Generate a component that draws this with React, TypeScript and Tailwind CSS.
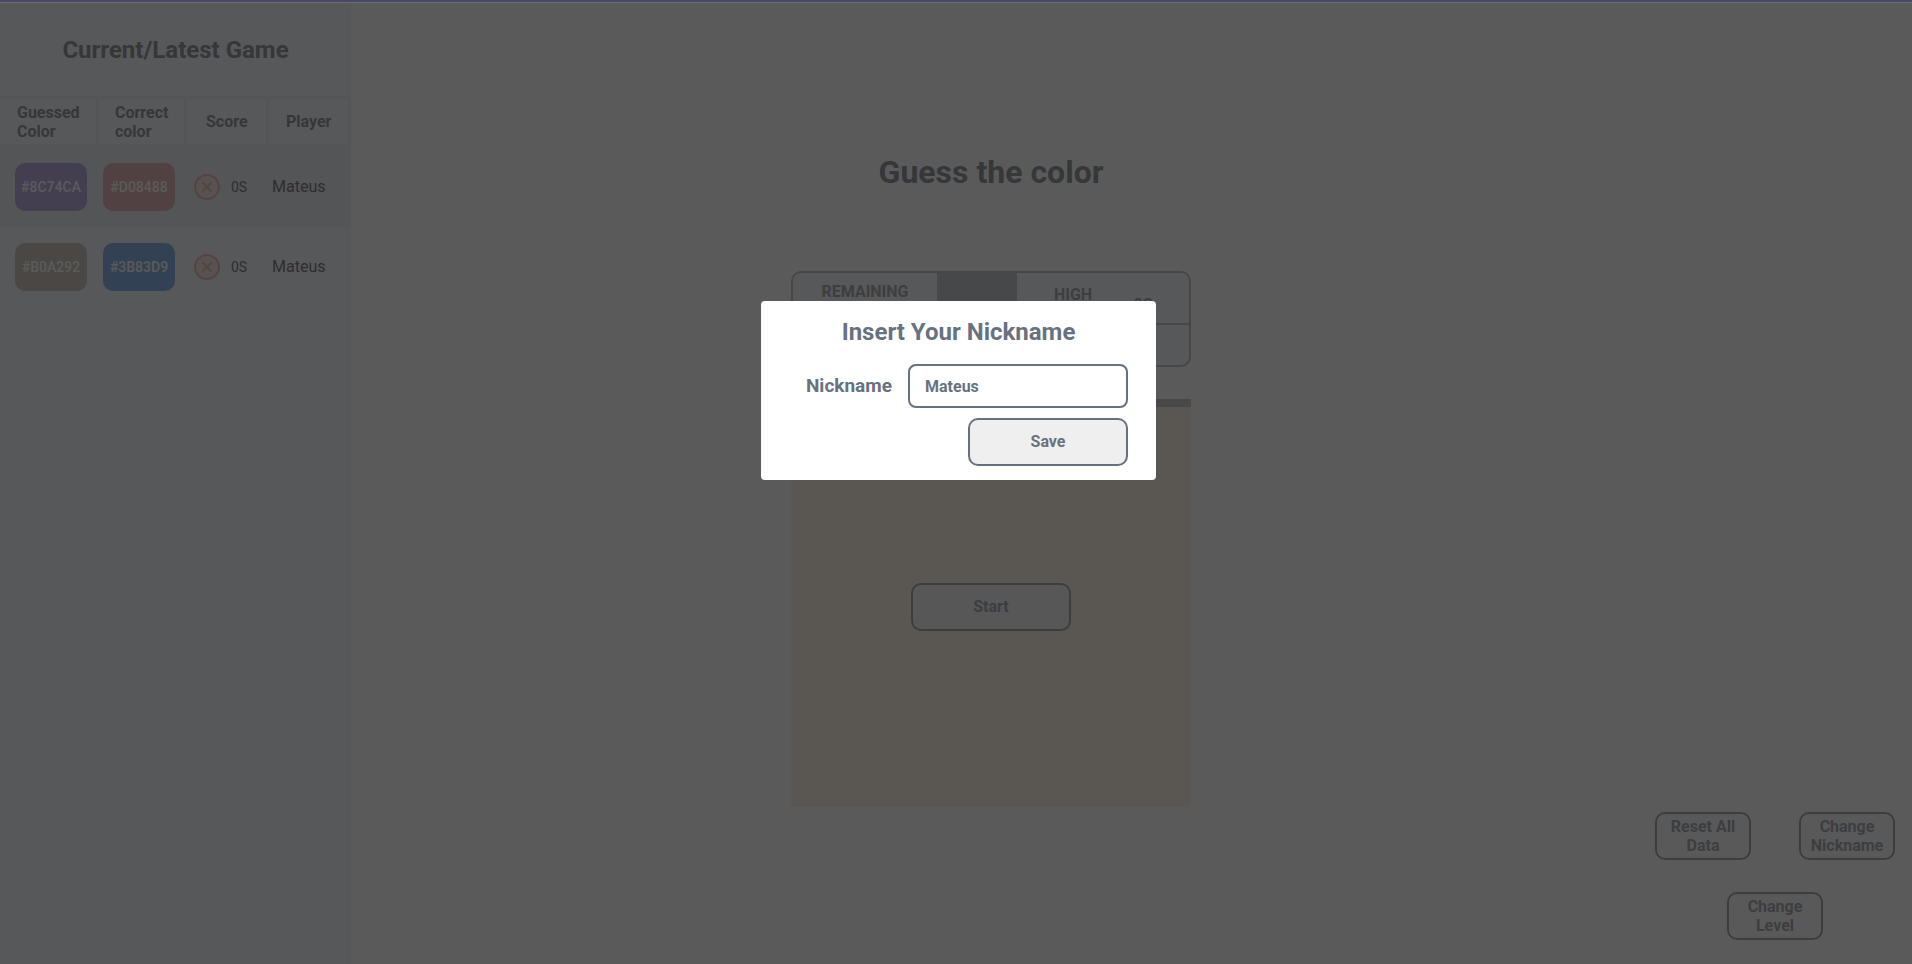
import React from "react";

type Guess = {
  guessed: string;
  guessedClass: string;
  correct: string;
  correctClass: string;
  score: string;
  player: string;
};

const guesses: Guess[] = [
  { guessed: "#8C74CA", guessedClass: "bg-[#8c74ca]", correct: "#D08488", correctClass: "bg-[#d08488]", score: "0S", player: "Mateus" },
  { guessed: "#B0A292", guessedClass: "bg-[#b0a292]", correct: "#3B83D9", correctClass: "bg-[#3b83d9]", score: "0S", player: "Mateus" },
];

const outline = "rounded-[10px] border-2 border-[#667080] font-bold text-[#68727f]";

function WrongIcon() {
  return (
    <svg viewBox="0 0 26 26" className="size-[26px] shrink-0" fill="none" stroke="#e88a80" strokeWidth="2" role="img" aria-label="Wrong">
      <circle cx="13" cy="13" r="12" fill="#f0dad4" />
      <path d="M8.5 8.5l9 9M17.5 8.5l-9 9" />
    </svg>
  );
}

function Swatch({ code, color }: { code: string; color: string }) {
  return (
    <div className={`flex h-12 w-[72px] items-center justify-center rounded-[10px] text-sm font-medium text-white ${color}`}>
      {code}
    </div>
  );
}

function Sidebar() {
  const heading = "h-[51px] border-y-[3px] border-r-[3px] border-[#e2e5ea] bg-[#f1f5f9] text-left text-base leading-[19px] font-bold";
  return (
    <aside className="w-[351px] shrink-0 bg-[#f1f5f9]">
      <h2 className="flex h-[93px] items-center justify-center text-2xl font-bold text-[#475058]">
        Current/Latest Game
      </h2>
      <table className="w-full table-fixed border-separate border-spacing-0">
        <colgroup>
          <col className="w-[99px]" />
          <col className="w-[88px]" />
          <col className="w-[82px]" />
          <col />
        </colgroup>
        <thead className="text-[#475058]">
          <tr>
            <th className={`${heading} pl-[17px]`}>Guessed<br />Color</th>
            <th className={`${heading} pl-4`}>Correct<br />color</th>
            <th className={`${heading} pl-[19px]`}>Score</th>
            <th className={`${heading} pl-[17px]`}>Player</th>
          </tr>
        </thead>
        <tbody>
          {guesses.map((g) => (
            <tr key={g.guessed} className="h-20 odd:bg-[#e2e5ea]">
              <td className="pl-[15px]"><Swatch code={g.guessed} color={g.guessedClass} /></td>
              <td className="pl-1"><Swatch code={g.correct} color={g.correctClass} /></td>
              <td className="pl-[7px]">
                <div className="flex items-center gap-[11px] text-sm text-[#1c2024]">
                  <WrongIcon />
                  {g.score}
                </div>
              </td>
              <td className="pl-[3px] text-base text-[#1c2024]">{g.player}</td>
            </tr>
          ))}
        </tbody>
      </table>
    </aside>
  );
}

function ScoreBoard() {
  return (
    <div className="flex h-24 overflow-hidden rounded-[10px] border-2 border-[#9a9fa4] bg-[#f1f5f9] text-base leading-[19px] font-bold text-[#68727f]">
      <p className="w-[144px] pt-[9px] text-center">REMAINING</p>
      <div className="w-20 bg-[#a1a3a9]" />
      <div className="flex-1">
        <div className="flex h-[52px] border-b-2 border-[#9a9fa4]">
          <p className="w-28 pt-3 text-center">HIGH</p>
          <p className="flex-1 pt-[22px] pr-8 text-center">0S</p>
        </div>
      </div>
    </div>
  );
}

function Game() {
  return (
    <main className="flex flex-1 flex-col items-center">
      <h1 className="pt-[149px] text-[32px] leading-10 font-bold text-[#475058]">Guess the color</h1>
      <section className="mt-[79px] w-[400px]">
        <ScoreBoard />
        <div className="mt-8 h-2 bg-[#a1a3a9]" />
        <div className="flex aspect-square items-start justify-center bg-[#ffebd7] pt-44">
          <button type="button" className={`h-12 w-40 bg-[#efefef] ${outline}`}>Start</button>
        </div>
      </section>
    </main>
  );
}

function Actions() {
  const button = `h-12 w-24 bg-[#f7f7f7] text-base leading-[19px] ${outline}`;
  return (
    <nav className="flex w-[281px] shrink-0 flex-wrap content-end justify-center gap-x-12 gap-y-8 pr-[17px] pb-6 pl-6">
      <button type="button" className={button}>Reset All Data</button>
      <button type="button" className={button}>Change Nickname</button>
      <button type="button" className={button}>Change Level</button>
    </nav>
  );
}

function NicknameDialog() {
  return (
    <div className="fixed inset-0 flex items-start justify-center bg-[#313131]/80 pt-[301px] pl-[5px]">
      <form
        role="dialog"
        aria-labelledby="dialog-title"
        onSubmit={(e) => e.preventDefault()}
        className="flex w-[395px] flex-col items-end rounded bg-white px-7 pt-[15px] pb-3.5"
      >
        <h2 id="dialog-title" className="w-full text-center text-2xl font-bold text-[#68727f]">Insert Your Nickname</h2>
        <div className="mt-4 flex items-center gap-4">
          <label htmlFor="nickname" className="text-[19px] font-bold text-[#68727f]">Nickname</label>
          <input
            id="nickname"
            type="text"
            defaultValue="Mateus"
            className="h-11 w-[220px] rounded-lg border-2 border-[#667080] bg-white px-[15px] text-base font-bold text-[#68727f] outline-none"
          />
        </div>
        <button type="submit" className={`mt-2.5 h-12 w-40 bg-[#efefef] ${outline}`}>Save</button>
      </form>
    </div>
  );
}

export default function App() {
  return (
    <div className="flex min-h-screen flex-col bg-white font-[Roboto,sans-serif]">
      <div className="relative z-10 h-[3px] border-b border-[#6c6a7c] bg-[#464b62]" />
      <div className="flex flex-1">
        <Sidebar />
        <Game />
        <Actions />
      </div>
      <NicknameDialog />
    </div>
  );
}
